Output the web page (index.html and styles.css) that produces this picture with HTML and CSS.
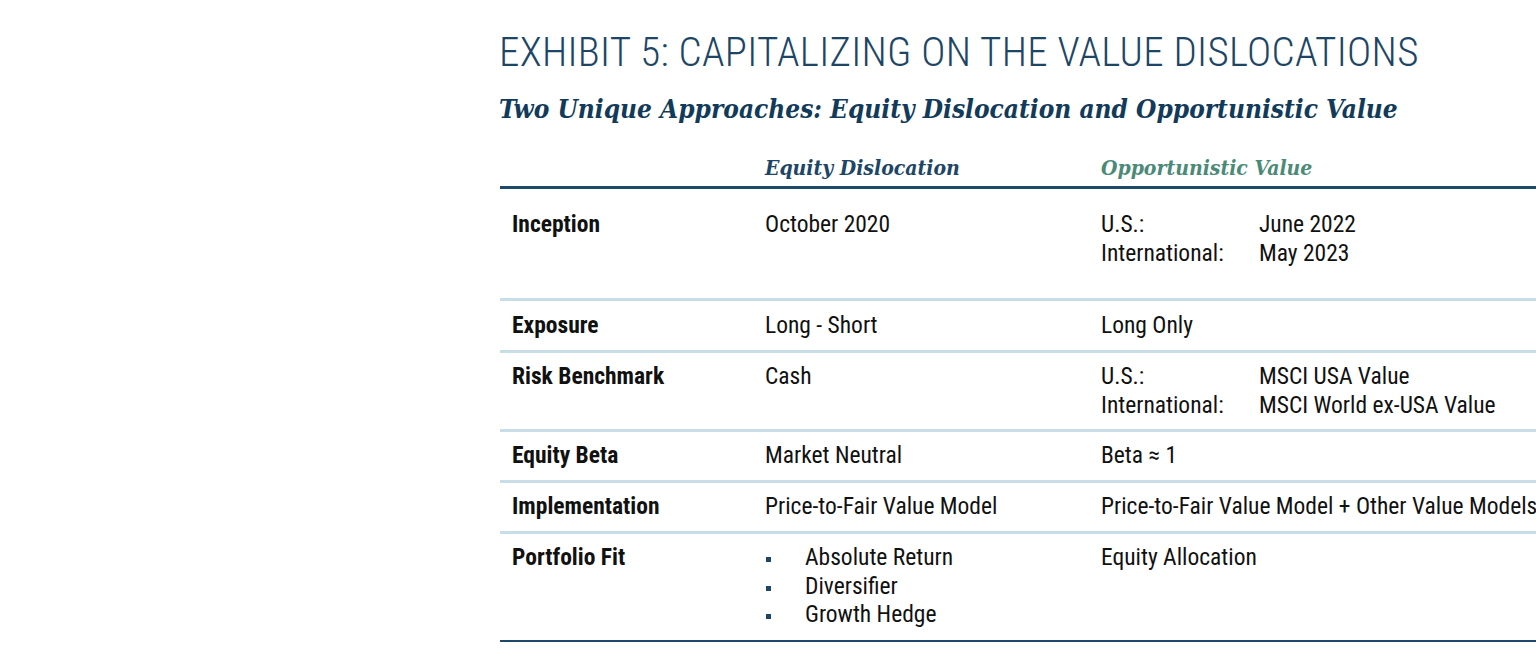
FILE: index.html
```html
<!DOCTYPE html>
<html lang="en">
<head>
<meta charset="utf-8">
<title>Exhibit 5</title>
<link rel="stylesheet" href="styles.css">
</head>
<body>
<div class="page">
  <h1 class="title">EXHIBIT 5: CAPITALIZING ON THE VALUE DISLOCATIONS</h1>
  <h2 class="subtitle">Two Unique Approaches: Equity Dislocation and Opportunistic Value</h2>
  <div class="grid">
    <div class="row head">
      <div></div>
      <div class="h-ed">Equity Dislocation</div>
      <div class="h-ov">Opportunistic Value</div>
    </div>
    <div class="row r-first">
      <div class="label">Inception</div>
      <div>October 2020</div>
      <div class="pair"><span>U.S.:</span><span>June 2022</span><span>International:</span><span>May 2023</span></div>
    </div>
    <div class="row r-exp">
      <div class="label">Exposure</div>
      <div>Long - Short</div>
      <div>Long Only</div>
    </div>
    <div class="row r-risk">
      <div class="label">Risk Benchmark</div>
      <div>Cash</div>
      <div class="pair"><span>U.S.:</span><span>MSCI USA Value</span><span>International:</span><span>MSCI World ex-USA Value</span></div>
    </div>
    <div class="row r-beta">
      <div class="label">Equity Beta</div>
      <div>Market Neutral</div>
      <div>Beta ≈ 1</div>
    </div>
    <div class="row r-impl">
      <div class="label">Implementation</div>
      <div>Price-to-Fair Value Model</div>
      <div class="nowrap">Price-to-Fair Value Model + Other Value Models</div>
    </div>
    <div class="row r-fit">
      <div class="label">Portfolio Fit</div>
      <ul class="bullets">
        <li>Absolute Return</li>
        <li>Diversifier</li>
        <li>Growth Hedge</li>
      </ul>
      <div>Equity Allocation</div>
    </div>
  </div>
</div>
</body>
</html>
```
FILE: styles.css
```css
html, body {
  margin: 0;
  padding: 0;
  background: #ffffff;
  overflow: hidden;
}

.page {
  padding-left: 499px;
  width: 1100px;
  font-family: "Roboto Condensed", "Roboto", "Liberation Sans", sans-serif;
  font-stretch: condensed;
}

.title {
  margin: 28px 0 0 0;
  font-size: 41px;
  line-height: 48px;
  font-weight: 300;
  color: #1d4666;
  white-space: nowrap;
  letter-spacing: 0.3px;
}

.subtitle {
  margin: 17px 0 0 0;
  font-family: "DejaVu Serif", "Liberation Serif", serif;
  font-style: italic;
  font-weight: 700;
  font-size: 26px;
  line-height: 32px;
  color: #123a5a;
  white-space: nowrap;
}

.grid {
  margin-top: 30px;
  margin-left: 1px;
  width: 1100px;
  font-size: 23.5px;
  line-height: 29px;
  color: #111111;
}

.row {
  display: grid;
  grid-template-columns: 265px 336px 1fr;
  align-items: start;
  box-sizing: border-box;
  border-bottom: 3px solid #c9dde8;
  padding-top: 9px;
}

.row.head {
  font-family: "DejaVu Serif", "Liberation Serif", serif;
  font-style: italic;
  font-weight: 700;
  font-size: 21px;
  line-height: 26px;
  padding: 0 0 5px 0;
  border-bottom-color: #1d4a6b;
}

.h-ed { color: #1d4666; }
.h-ov { color: #4b8a77; }

.label {
  padding-left: 12px;
  font-weight: 700;
}

.r-first { height: 112px; padding-top: 21px; }
.r-exp { height: 52px; padding-top: 10px; }
.r-risk { height: 79px; }
.r-beta { height: 51px; }
.r-impl { height: 51px; }
.r-fit { height: 108px; border-bottom: 2px solid #1d4a6b; }

.nowrap { white-space: nowrap; }

.pair {
  display: grid;
  grid-template-columns: 158px auto;
}

.bullets {
  list-style: none;
  margin: 0;
  padding: 0;
}

.bullets li {
  display: flex;
  align-items: flex-start;
  gap: 34px;
  line-height: 28.5px;
}

.bullets li::before {
  content: "";
  width: 5px;
  height: 5px;
  margin: 14px 0 0 1px;
  background: #1d4666;
  flex: none;
}
```
